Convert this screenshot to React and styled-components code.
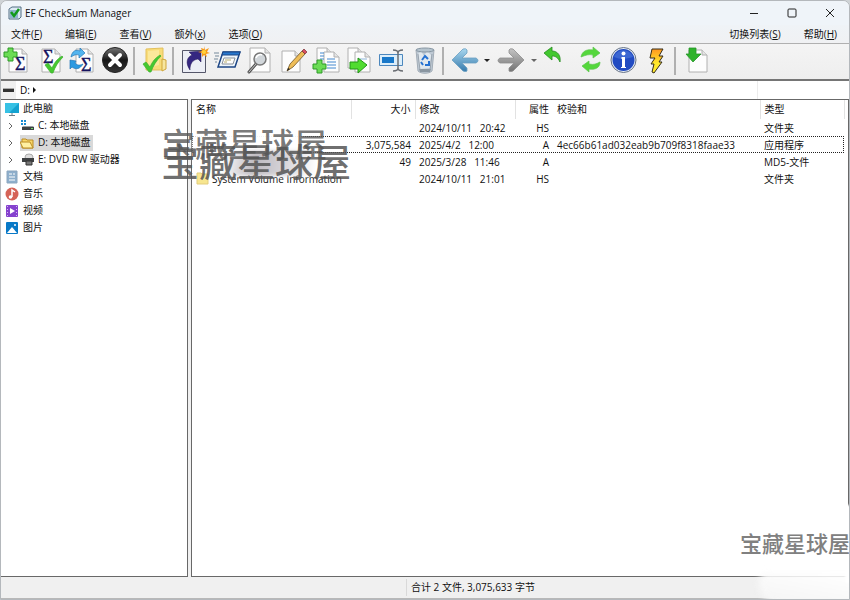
import React from "react";
import styled, { createGlobalStyle, css } from "styled-components";

const GlobalStyle = createGlobalStyle`
  * {
    box-sizing: border-box;
  }

  body {
    margin: 0;
    background: #cfd3d6;
    color: #111;
    font-family: "Open Sans", "Noto Sans CJK SC", sans-serif;
    font-size: 10px;
    line-height: 17px;
  }
`;

const Window = styled.div`
  position: relative;
  display: flex;
  flex-direction: column;
  height: 100vh;
  border: 1px solid #b4b8bc;
  border-radius: 7px 7px 0 0;
  background: #f0f0f0;
  overflow: hidden;
`;

const TitleBar = styled.header`
  display: flex;
  align-items: center;
  height: 24px;
  padding-left: 7px;
  background: #eff4f9;
`;

const Title = styled.h1`
  flex: 1;
  margin: 0 0 0 3px;
  font-size: 10px;
  font-weight: 400;
`;

const WindowButton = styled.button`
  display: flex;
  align-items: center;
  justify-content: center;
  width: 38px;
  height: 24px;
  padding: 0;
  border: 0;
  background: none;
`;

const MenuBar = styled.nav`
  display: flex;
  align-items: center;
  height: 18px;
  padding: 0 12px 0 10px;
  background: linear-gradient(#eff3f7, #f0f1f3);
`;

const MenuButton = styled.button`
  margin-right: 23px;
  margin-left: ${(props) => (props.$right ? "auto" : 0)};
  padding: 0;
  border: 0;
  background: none;
  color: inherit;
  font: inherit;
  white-space: nowrap;

  &:last-child {
    margin-right: 0;
  }
`;

const Toolbar = styled.div`
  display: flex;
  height: 38px;
  padding-top: 1px;
  border-top: 1px solid #b0b0b0;
  border-bottom: 2px solid #757575;
  background: linear-gradient(#f4f4f4, #eeeeee);
`;

const ToolButton = styled.button`
  flex: none;
  width: ${(props) => (props.$narrow ? 14 : 33)}px;
  height: 32px;
  padding: 0;
  border: 0;
  background: none;

  svg {
    display: block;
  }
`;

const Separator = styled.span`
  flex: none;
  width: 6px;
  height: 30px;
  background: linear-gradient(#b0b0b0, #b0b0b0) 0 2px / 2px 100% no-repeat;
`;

const AddressBar = styled.div`
  display: flex;
  align-items: center;
  height: 18px;
  background: #fff;
`;

const DriveBox = styled.span`
  display: flex;
  align-items: center;
  width: 15px;
  height: 18px;
  background: #f0f0f0;
`;

const Crumb = styled.button`
  display: flex;
  align-items: center;
  gap: 3px;
  padding: 0 4px;
  border: 0;
  background: none;
  font: inherit;
`;

const AddressEnd = styled.span`
  width: 92px;
  height: 18px;
  margin-left: auto;
  border-left: 1px solid #ececec;
`;

const Panes = styled.main`
  display: flex;
  flex: 1;
  gap: 3px;
  min-height: 0;
`;

const pane = css`
  border: 1px solid #686868;
  background: #fff;
  overflow: hidden;
`;

const TreePane = styled.aside`
  ${pane}
  flex: none;
  width: 187px;
  border-left: 0;
`;

const ListPane = styled.section`
  ${pane}
  flex: 1;
`;

const Tree = styled.ul`
  margin: 0;
  padding: 0 0 0 4px;
  list-style: none;
`;

const TreeItem = styled.li`
  display: flex;
  align-items: center;
  height: 17px;
`;

const Expander = styled.button`
  display: flex;
  width: 15px;
  padding: 0 0 0 3px;
  border: 0;
  background: none;
`;

const TreeLabel = styled.a`
  display: flex;
  align-items: center;
  gap: 4px;
  height: 16px;
  padding-right: 3px;
  background: ${(props) => (props.$selected ? "#d9d9d9" : "none")};
  color: inherit;
  text-decoration: none;
`;

const FileTable = styled.table`
  width: 652px;
  border-collapse: collapse;
  table-layout: fixed;
`;

const HeadCell = styled.th`
  height: 19px;
  padding: 0 4px;
  border-right: ${(props) => (props.$line ? "1px solid #e2e2e2" : 0)};
  font-weight: 400;
  text-align: ${(props) => (props.$align ? props.$align : "left")};
`;

const FileRow = styled.tr`
  outline: ${(props) => (props.$focused ? "1px dotted #222" : "none")};
  outline-offset: -1px;
`;

const Cell = styled.td`
  height: 17px;
  padding: 0 4px;
  line-height: 16px;
  text-align: ${(props) => (props.$align ? props.$align : "left")};
  white-space: pre;
`;

const FileName = styled.span`
  display: flex;
  align-items: center;
  gap: 2px;
`;

const StatusBar = styled.footer`
  display: flex;
  align-items: center;
  height: 22px;
  border-bottom: 1px solid #b8b8b8;
  background: #f0f0f0;
`;

const StatusPart = styled.span`
  flex: ${(props) => (props.$grow ? "1" : "0 0 406px")};
  height: 17px;
  padding-left: 4px;
  border-right: ${(props) => (props.$grow ? 0 : "1px solid #d9d9d9")};
`;

const Watermark = styled.span`
  position: absolute;
  top: ${(props) => props.$top}px;
  left: ${(props) => props.$left}px;
  color: ${(props) => props.$color};
  font-family: "Noto Sans CJK SC", sans-serif;
  font-size: ${(props) => props.$size}px;
  font-weight: 500;
  line-height: 1;
  white-space: nowrap;
  pointer-events: none;
`;

const Smudge = styled.span`
  position: absolute;
  top: 150px;
  left: 222px;
  width: 92px;
  height: 25px;
  background: linear-gradient(100deg, #ffffff, #bdb9bf 35%, #d5d3d8 65%, #ffffff);
  filter: blur(2px);
  pointer-events: none;
`;

const RowFade = styled.span`
  position: absolute;
  top: 132px;
  left: 192px;
  width: 110px;
  height: 26px;
  background: #fff;
  filter: blur(2px);
  pointer-events: none;
`;

const Fade = styled.span`
  position: absolute;
  right: -8px;
  bottom: -6px;
  width: 98px;
  height: 32px;
  border-radius: 8px 0 0 20px;
  background: linear-gradient(10deg, #f4f4f4, #ffffff);
  filter: blur(3px);
  pointer-events: none;
`;

const EdgeFade = styled.span`
  position: absolute;
  right: -2px;
  bottom: 16px;
  width: 6px;
  height: 78px;
  background: #fff;
  filter: blur(1px);
  pointer-events: none;
`;

function Icon({ children }) {
  return (
    <svg width="33" height="32" viewBox="0 0 33 32" fill="none" aria-hidden="true">
      {children}
    </svg>
  );
}

function Page({ x = 8, y = 4, w = 18, h = 23 }) {
  return (
    <g>
      <path
        d={`M${x} ${y}h${w - 5}l5 5v${h - 5}h-${w}z`}
        fill="#fdfdfd"
        stroke="#b0b0b0"
      />
      <path d={`M${x + w - 5} ${y}v5h5`} fill="#e4e4e4" stroke="#b0b0b0" />
    </g>
  );
}

function Sigma({ x, y }) {
  return (
    <text x={x} y={y} fill="#17145f" stroke="#17145f" strokeWidth=".4" fontFamily="Liberation Serif, serif" fontSize="18">
      Σ
    </text>
  );
}

function Check({ x, y }) {
  return (
    <path
      transform={`translate(${x} ${y})`}
      d="M0 9l3-2 4 5C9 7 12 3 17 0l1 1C13 6 10 11 8 17H6z"
      fill="#45c92f"
      stroke="#3fae31"
      strokeWidth=".7"
    />
  );
}

function Plus({ x, y }) {
  return (
    <path
      transform={`translate(${x} ${y})`}
      d="M4 0h5v4h4v5H9v4H4V9H0V4h4z"
      fill="#6bdc55"
      stroke="#2f9a28"
    />
  );
}

const AddIcon = () => (
  <Icon>
    <Page />
    <Sigma x={14} y={25} />
    <Plus x={3} y={3} />
  </Icon>
);

const VerifyIcon = () => (
  <Icon>
    <Page />
    <Sigma x={9} y={18} />
    <Check x={11} y={11} />
  </Icon>
);

const UpdateIcon = () => (
  <Icon>
    <Page x={9} w={17} />
    <Sigma x={14} y={26} />
    <path d="M4 12c1-6 5-8 9-6V3l5 5-6 5v-3c-3-1-5 0-8 2z" fill="#54b5ef" stroke="#2277b8" strokeWidth=".7" />
    <path d="M3 15l6 1-1 2c2 2 4 3 8 1-3 5-7 6-11 3l-2 2z" fill="#2c9ae1" stroke="#2277b8" strokeWidth=".7" />
  </Icon>
);

const StopIcon = () => (
  <Icon>
    <defs>
      <linearGradient id="stop" x1="0" y1="0" x2="0" y2="1">
        <stop stopColor="#777" />
        <stop offset=".5" stopColor="#161616" />
        <stop offset="1" stopColor="#373737" />
      </linearGradient>
    </defs>
    <circle cx="15" cy="15" r="12.500" fill="url(#stop)" stroke="#222" />
    <path d="M10 10l10 10M20 10L10 20" stroke="#fff" strokeWidth="4" strokeLinecap="round" />
  </Icon>
);

const FolderCheckIcon = () => (
  <Icon>
    <path d="M7 4l17-1v22H7z" fill="#f8dc79" stroke="#e3c05c" />
    <path d="M23 14l4 1v9l-4 2z" fill="#f7e69e" stroke="#cfa63a" />
    <path d="M9 6l11-1v15L9 23z" fill="#fbe89b" />
    <Check x={4} y={10} />
  </Icon>
);

const ShortcutIcon = () => (
  <Icon>
    <path d="M4.500 5.500h23v22h-23z" fill="#eceef5" stroke="#55576a" />
    <path d="M12 25c-5-7-3-13 2-15l-3-3 12-1v11l-3-3c-6 1-8 5-8 11z" fill="#352781" stroke="#211552" strokeWidth=".5" />
    <path d="M26 1l1 4 4-2-2 4 3 1-4 1 1 3-3-2-2 2v-4l-4-1 4-1-1-3 3 1z" fill="#f79a18" />
    <circle cx="26" cy="7" r="2" fill="#ffd23c" />
  </Icon>
);

const WindowIcon = () => (
  <Icon>
    <path d="M12 7h17l-5 15H7z" fill="#eef5fb" stroke="#1d4685" strokeWidth="1.500" />
    <path d="M12 7h17l-1 3H11z" fill="#2878ce" stroke="#1d4685" />
    <path d="M13 13h11l-2 6H11z" fill="#fff" stroke="#8a9199" />
    <path d="M14 15h6M13 17h3" stroke="#b9ae6c" />
    <path d="M3 8h5M4 11h4M3 14h4M4 17h2" stroke="#75899b" />
  </Icon>
);

const SearchIcon = () => (
  <Icon>
    <Page x={6} y={3} w={20} h={24} />
    <path d="M12 19l-7 8" stroke="#555" strokeWidth="3" strokeLinecap="round" />
    <path d="M12 19l-7 8" stroke="#c5c5c5" strokeLinecap="round" />
    <circle cx="16" cy="14" r="6" fill="#d1d6da" stroke="#777" strokeWidth="1.500" />
    <path d="M12 13c1-3 4-4 6-3" stroke="#fff" strokeWidth="1.500" />
  </Icon>
);

const EditIcon = () => (
  <Icon>
    <Page x={5} y={6} w={18} h={21} />
    <path d="M10 26l3-7L25 6l3 3-12 13z" fill="#eebd58" stroke="#6f5426" strokeWidth=".8" />
    <path d="M25 6l2-2 3 3-2 2z" fill="#d84f60" stroke="#763036" strokeWidth=".7" />
    <path d="M10 26l1-3 2 1z" fill="#222" />
  </Icon>
);

const CopyIcon = () => (
  <Icon>
    <Page x={7} y={3} w={15} h={20} />
    <Page x={14} y={7} w={15} h={20} />
    <path d="M10 8h4M10 11h4M10 14h4M17 14h8M17 17h9M17 20h9M17 23h9" stroke="#4388d0" />
    <Plus x={3} y={15} />
  </Icon>
);

const MoveIcon = () => (
  <Icon>
    <Page x={5} y={3} w={15} h={20} />
    <Page x={12} y={7} w={15} h={20} />
    <path d="M16 14h8" stroke="#8fb6d9" />
    <path d="M7 17h8v-4l9 7-9 8v-4H7z" fill="#51dc30" stroke="#259619" />
  </Icon>
);

const RenameIcon = () => (
  <Icon>
    <path d="M3.500 9.500h23v11h-23z" fill="#dceefa" stroke="#4c87bd" />
    <path d="M6 12h12v6H6z" fill="#1878c9" />
    <path d="M17 5c3 0 5 1 5 3 0-2 2-3 5-3M22 8v15M17 26c3 0 5-1 5-3 0 2 2 3 5 3" stroke="#6a6e73" strokeWidth="1.500" />
  </Icon>
);

const TrashIcon = () => (
  <Icon>
    <path d="M7 5h18l-2 21c-3 3-11 3-14 0z" fill="#bec9d4" stroke="#a3adb7" />
    <path d="M9 9l3-3 3 5 3-5 4 4-1 13-10 1z" fill="#e1e8ee" />
    <ellipse cx="16" cy="5" rx="9" ry="2" fill="#b6c4ce" stroke="#8796a3" />
    <path d="M13 15l3-4 3 3M20 16v4h-4M14 20l-2-3" stroke="#2672d2" strokeWidth="2" />
    <path d="M10 24h12l-1 3H11z" fill="#8a96a1" />
    <path d="M9 9l2 16M23 9l-2 16" stroke="#98a3ae" />
  </Icon>
);

function ArrowIcon({ forward }) {
  const id = forward ? "forward" : "back";
  return (
    <Icon>
      <defs>
        <linearGradient id={id} x1="0" y1="0" x2="0" y2="1">
          <stop stopColor={forward ? "#c4c4c4" : "#a9d7ef"} />
          <stop offset="1" stopColor={forward ? "#727272" : "#367aac"} />
        </linearGradient>
      </defs>
      <path
        transform={forward ? "translate(33 0) scale(-1 1)" : undefined}
        d="M4 15L15 4q3-1 4 1v3l-5 5h14q2 1 2 2.500t-2 2.500H14l5 5v3q-1 1-4 0z"
        fill={`url(#${id})`}
        stroke={forward ? "#8d8d8d" : "#6a9fc1"}
        strokeWidth=".8"
      />
    </Icon>
  );
}

const UpIcon = () => (
  <Icon>
    <path d="M2 8l8-6v4c6 0 9 5 8 11-2-4-4-6-8-6v4z" fill="#43c82f" stroke="#258b1f" strokeWidth=".8" />
  </Icon>
);

const RefreshIcon = () => (
  <Icon>
    <path d="M6 12c1-6 6-8 12-7V2l7 6-7 5v-3c-4-1-7 0-12 2z" fill="#55d73c" stroke="#5cc44c" strokeWidth=".7" />
    <path d="M25 17c0 6-5 8-11 7v3l-7-6 7-5v3c5 1 7 0 11-2z" fill="#55d73c" stroke="#5cc44c" strokeWidth=".7" />
  </Icon>
);

const InfoIcon = () => (
  <Icon>
    <circle cx="15.500" cy="15" r="12.500" fill="#e7edf4" stroke="#667387" />
    <circle cx="15.500" cy="15" r="11" fill="#214bc2" />
    <path d="M6 12c3-9 16-9 19 0-7 2-12 3-19 0z" fill="#3b66d2" />
    <circle cx="15.500" cy="8.500" r="2" fill="#fff" />
    <path d="M15.500 12v11" stroke="#fff" strokeWidth="3" />
    <path d="M13 13h3M13 22.500h5" stroke="#fff" />
  </Icon>
);

const BoltIcon = () => (
  <Icon>
    <defs>
      <linearGradient id="bolt" x1="0" y1="0" x2="0" y2="1">
        <stop stopColor="#ff961f" />
        <stop offset=".6" stopColor="#ffe92c" />
      </linearGradient>
    </defs>
    <path d="M11 4h11l-4 7h4l-4 6h3l-8 11-2-1 2-8h-3l4-6H9z" fill="url(#bolt)" stroke="#352c1b" />
  </Icon>
);

const ImportIcon = () => (
  <Icon>
    <Page x={9} y={5} w={18} h={22} />
    <path d="M9 3h7v6h5l-8 8-7-8h3z" fill="#2eb32b" stroke="#27942a" strokeWidth=".8" />
  </Icon>
);

const TriangleIcon = ({ color = "#222" }) => (
  <svg width="14" height="32" viewBox="0 0 14 32" aria-hidden="true">
    <path d="M3 14h6l-3 3z" fill={color} />
  </svg>
);

const tools = [
  { label: "添加", icon: <AddIcon /> },
  { label: "校验", icon: <VerifyIcon /> },
  { label: "更新", icon: <UpdateIcon /> },
  { label: "停止", icon: <StopIcon /> },
  null,
  { label: "校验文件夹", icon: <FolderCheckIcon /> },
  null,
  { label: "快捷方式", icon: <ShortcutIcon /> },
  { label: "运行", icon: <WindowIcon /> },
  { label: "查看", icon: <SearchIcon /> },
  { label: "编辑", icon: <EditIcon /> },
  { label: "复制", icon: <CopyIcon /> },
  { label: "移动", icon: <MoveIcon /> },
  { label: "重命名", icon: <RenameIcon /> },
  { label: "删除", icon: <TrashIcon /> },
  null,
  { label: "后退", icon: <ArrowIcon /> },
  { label: "后退列表", icon: <TriangleIcon />, narrow: true },
  { label: "前进", icon: <ArrowIcon forward /> },
  { label: "前进列表", icon: <TriangleIcon color="#666" />, narrow: true },
  { label: "向上", icon: <UpIcon /> },
  { label: "刷新", icon: <RefreshIcon /> },
  { label: "信息", icon: <InfoIcon /> },
  { label: "执行", icon: <BoltIcon /> },
  null,
  { label: "导入", icon: <ImportIcon /> },
];

const menus = [
  { label: "文件", letter: "F" },
  { label: "编辑", letter: "E" },
  { label: "查看", letter: "V" },
  { label: "额外", letter: "x" },
  { label: "选项", letter: "O" },
  { label: "切换列表", letter: "S", right: true },
  { label: "帮助", letter: "H" },
];

const treeArt = {
  pc: (
    <>
      <path d="M0 1h14v10H0z" fill="#15a2d0" />
      <path d="M0 1h14L4 11H0z" fill="#37c1e4" />
      <path d="M7 11v2M4 13.500h6" stroke="#6f7c84" />
    </>
  ),
  drive: (
    <>
      <path d="M1 1h2v2H1zM4 1h2v2H4zM1 4h2v2H1zM4 4h2v2H4z" fill="#198bd2" />
      <path d="M2 8h12v3H2z" fill="#3d4245" />
      <path d="M3 7h10l1 1H2z" fill="#9ba0a3" />
      <path d="M11 9.500h2" stroke="#72db68" />
    </>
  ),
  folder: (
    <>
      <path d="M2 3h4l1 1h6v8H2z" fill="#f7d568" stroke="#bb8c25" />
      <path d="M0 6h10l3 6H3z" fill="#fff0a2" stroke="#bb8c25" />
    </>
  ),
  dvd: (
    <>
      <ellipse cx="9" cy="4" rx="4" ry="3" fill="#ddd" stroke="#aaa" />
      <path d="M2 5h12v4H2z" fill="#3e4143" />
      <path d="M6 8h6v4H6z" fill="#777" stroke="#333" />
    </>
  ),
  doc: (
    <>
      <path d="M2 1h10v12H2z" fill="#8eafcc" stroke="#8ba6bf" />
      <path d="M4 4h3M4 7h6M4 10h6M8 4h2" stroke="#fff" />
    </>
  ),
  music: (
    <>
      <circle cx="7" cy="7" r="6.500" fill="#d56357" />
      <path d="M7 10V3l3 2" stroke="#fff" strokeWidth="1.500" />
      <circle cx="5.500" cy="10" r="1.800" fill="#fff" />
    </>
  ),
  video: (
    <>
      <rect x="1" y="1" width="12" height="12" rx="1" fill="#8542ce" />
      <path d="M2.500 2v10M11.500 2v10" stroke="#d8b8f4" strokeDasharray="1 2" />
      <path d="M5 4l5 3-5 3z" fill="#fff" />
    </>
  ),
  image: (
    <>
      <rect x="1" y="1" width="12" height="12" rx="1" fill="#0879c7" />
      <path d="M2 12l5-6 5 6z" fill="#fff" />
      <circle cx="10" cy="4" r="1" fill="#fff" />
    </>
  ),
};

const places = [
  { name: "此电脑", icon: "pc" },
  { name: "C: 本地磁盘", icon: "drive", child: true },
  { name: "D: 本地磁盘", icon: "folder", child: true, selected: true },
  { name: "E: DVD RW 驱动器", icon: "dvd", child: true },
  { name: "文档", icon: "doc" },
  { name: "音乐", icon: "music" },
  { name: "视频", icon: "video" },
  { name: "图片", icon: "image" },
];

const columns = [
  { name: "名称", width: 159, line: true },
  { name: "大小", width: 64, align: "right", line: true },
  { name: "修改", width: 100, line: true },
  { name: "属性", width: 38, align: "right" },
  { name: "校验和", width: 207, line: true },
  { name: "类型", width: 84, line: true },
];

const files = [
  { date: "2024/10/11", time: "20:42", attr: "HS", type: "文件夹" },
  {
    size: "3,075,584",
    date: "2025/4/2",
    time: "12:00",
    attr: "A",
    sum: "4ec66b61ad032eab9b709f8318faae33",
    type: "应用程序",
    focused: true,
  },
  { size: "49", date: "2025/3/28", time: "11:46", attr: "A", type: "MD5-文件" },
  { name: "System Volume Information", date: "2024/10/11", time: "21:01", attr: "HS", type: "文件夹" },
];

function App() {
  return (
    <>
      <GlobalStyle />
      <Window>
        <TitleBar>
          <svg width="14" height="14" viewBox="0 0 14 14" fill="none" aria-hidden="true">
            <path d="M1 3l3-2h9v10l-2 2H1z" fill="#dceaf3" stroke="#536f84" />
            <path d="M2 4h8v8H2z" fill="#8eb4cc" />
            <path d="M3 6l3 4 5-7" stroke="#119a1b" strokeWidth="2.500" />
          </svg>
          <Title>EF CheckSum Manager</Title>
          <WindowButton aria-label="最小化">
            <svg width="10" height="10" stroke="#222">
              <path d="M1 5.500h8" />
            </svg>
          </WindowButton>
          <WindowButton aria-label="最大化">
            <svg width="10" height="10" fill="none" stroke="#222">
              <rect x="1" y="1" width="8" height="8" rx="1" />
            </svg>
          </WindowButton>
          <WindowButton aria-label="关闭">
            <svg width="10" height="10" stroke="#222">
              <path d="M1 1l8 8M9 1L1 9" />
            </svg>
          </WindowButton>
        </TitleBar>
        <MenuBar>
          {menus.map((menu) => (
            <MenuButton key={menu.letter} $right={menu.right}>
              {menu.label}(<u>{menu.letter}</u>)
            </MenuButton>
          ))}
        </MenuBar>
        <Toolbar role="toolbar">
          {tools.map((tool, index) =>
            tool ? (
              <ToolButton key={tool.label} aria-label={tool.label} $narrow={tool.narrow}>
                {tool.icon}
              </ToolButton>
            ) : (
              <Separator key={index} />
            )
          )}
        </Toolbar>
        <AddressBar>
          <DriveBox>
            <svg width="14" height="6" aria-hidden="true">
              <path d="M2 2h11v3H2z" fill="#333" />
              <path d="M2 1.500h11" stroke="#aaa" />
            </svg>
          </DriveBox>
          <Crumb>
            D:
            <svg width="4" height="6" aria-hidden="true">
              <path d="M0 0l3 3-3 3z" fill="#111" />
            </svg>
          </Crumb>
          <AddressEnd />
        </AddressBar>
        <Panes>
          <TreePane>
            <Tree>
              {places.map((place) => (
                <TreeItem key={place.name}>
                  {place.child && (
                    <Expander aria-label="展开">
                      <svg width="5" height="8" fill="none" stroke="#666">
                        <path d="M1 1l3 3-3 3" />
                      </svg>
                    </Expander>
                  )}
                  <TreeLabel href="#" $selected={place.selected}>
                    <svg width="14" height="14" viewBox="0 0 14 14" fill="none" aria-hidden="true">
                      {treeArt[place.icon]}
                    </svg>
                    {place.name}
                  </TreeLabel>
                </TreeItem>
              ))}
            </Tree>
          </TreePane>
          <ListPane>
            <FileTable>
              <colgroup>
                {columns.map((column) => (
                  <col key={column.name} width={column.width} />
                ))}
              </colgroup>
              <thead>
                <tr>
                  {columns.map((column) => (
                    <HeadCell key={column.name} $align={column.align} $line={column.line}>
                      {column.name}
                    </HeadCell>
                  ))}
                </tr>
              </thead>
              <tbody>
                {files.map((file) => (
                  <FileRow key={file.date + file.time} $focused={file.focused}>
                    <Cell>
                      {file.name && (
                        <FileName>
                          <svg width="14" height="13" aria-hidden="true">
                            <path d="M1 1h4l1 1h6v10H1z" fill="#f7e68f" stroke="#e3cd7c" />
                          </svg>
                          {file.name}
                        </FileName>
                      )}
                    </Cell>
                    <Cell $align="right">{file.size}</Cell>
                    <Cell>{`${file.date}   ${file.time}`}</Cell>
                    <Cell $align="right">{file.attr}</Cell>
                    <Cell>{file.sum}</Cell>
                    <Cell>{file.type}</Cell>
                  </FileRow>
                ))}
              </tbody>
            </FileTable>
          </ListPane>
        </Panes>
        <StatusBar>
          <StatusPart />
          <StatusPart $grow>合计 2 文件, 3,075,633 字节</StatusPart>
        </StatusBar>
        <RowFade />
        <Smudge />
        <Fade />
        <EdgeFade />
        <Watermark $top={126} $left={161} $size={33} $color="rgba(85, 85, 85, 0.8)">
          宝藏星球屋
        </Watermark>
        <Watermark $top={140} $left={160} $size={38} $color="rgba(85, 85, 85, 0.85)">
          宝藏星球屋
        </Watermark>
        <Watermark $top={530} $left={739} $size={22} $color="#808080">
          宝藏星球屋
        </Watermark>
      </Window>
    </>
  );
}

export default App;
